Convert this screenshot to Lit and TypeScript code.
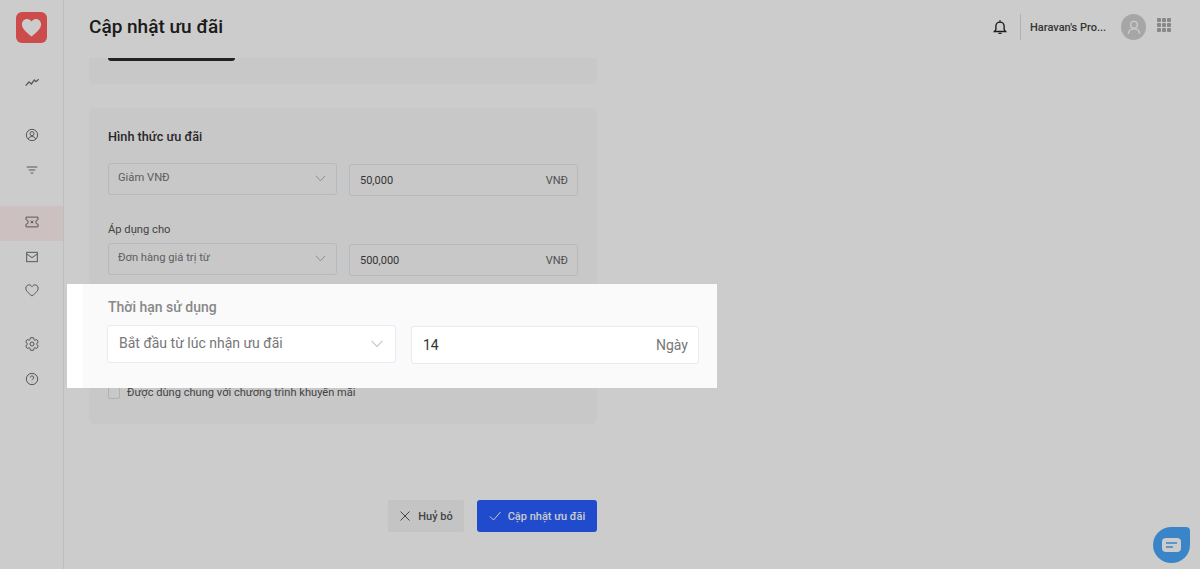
import { LitElement, html, css, svg } from "lit";
import { customElement } from "lit/decorators.js";

const nav = [
  { cls: "g1", d: svg`<path d="M2.500 16l5-5.500 3.500 3 4.500-6 2.500 2.500 4-3.500"/>` },
  { cls: "", d: svg`<circle cx="12" cy="12" r="8.500"/><circle cx="12" cy="10" r="3"/><path d="M6.500 18c1-2.600 3-3.600 5.500-3.600s4.500 1 5.500 3.600"/>` },
  { cls: "", d: svg`<path d="M4 7.500h16M7 12h10M10 16.500h4"/>` },
  { cls: "g3 active", d: svg`<path d="M3 4.700h18v4a3.300 3.300 0 0 0 0 6.600v4H3v-4a3.300 3.300 0 0 0 0-6.600z"/><path d="M10 10l4 4M14 10l-4 4"/>` },
  { cls: "short", d: svg`<rect x="4" y="5" width="16" height="14"/><path d="M4 7.500l8 5.500 8-5.500"/>` },
  { cls: "tall", d: svg`<path d="M12 21C5.500 15.800 2.800 13 2.800 9.300 2.800 6.300 5 4.300 7.500 4.300c1.900 0 3.500 1 4.500 2.700 1-1.700 2.600-2.700 4.500-2.700 2.500 0 4.700 2 4.700 5 0 3.700-2.700 6.500-9.200 11.700z"/>` },
  { cls: "g4", d: svg`<path d="M19.140 12.940c.04-.3.06-.61.06-.94 0-.32-.02-.64-.07-.94l2.030-1.580c.18-.14.23-.41.12-.61l-1.920-3.320c-.12-.22-.37-.29-.59-.22l-2.390.96c-.5-.38-1.030-.7-1.620-.94l-.36-2.540c-.04-.24-.24-.41-.48-.41h-3.840c-.24 0-.43.17-.47.41l-.36 2.540c-.59.24-1.130.57-1.620.94l-2.390-.96c-.22-.08-.47 0-.59.22L2.740 8.870c-.12.21-.08.47.12.61l2.030 1.580c-.05.3-.09.63-.09.94s.02.64.07.94l-2.030 1.580c-.18.14-.23.41-.12.61l1.920 3.320c.12.22.37.29.59.22l2.390-.96c.5.38 1.030.7 1.620.94l.36 2.540c.05.24.24.41.48.41h3.840c.24 0 .44-.17.47-.41l.36-2.540c.59-.24 1.130-.56 1.620-.94l2.390.96c.22.08.47 0 .59-.22l1.920-3.320c.12-.22.07-.47-.12-.61l-2.010-1.580z"/><circle cx="12" cy="12" r="3"/>` },
  { cls: "", d: svg`<circle cx="12" cy="12" r="8.500"/><path d="M9.500 9.800a2.500 2.500 0 1 1 3.700 2.200c-.8.45-1.200 1-1.200 1.900"/><path d="M12 16.300v.6"/>` },
];

const chevron = html`<svg class="chev" viewBox="0 0 12 8"><path d="M.7.9L6 6.700 11.300.9"/></svg>`;

@customElement("app-root")
export class AppRoot extends LitElement {
  static styles = css`
    :host { display: block; height: 569px; overflow: hidden; position: relative; background: #fff;
      font-family: Roboto, "Noto Sans", sans-serif; color: #333; }
    .shell { display: flex; height: 569px; }
    .side { width: 63px; flex: none; border-right: 1px solid #eee; display: flex; flex-direction: column; align-items: stretch; }
    .logo { width: 31px; height: 31px; margin: 12px 0 0 16px; border-radius: 6px; background: #ff5e5e; display: flex; align-items: center; justify-content: center; }
    .logo svg { width: 23px; height: 23px; fill: #fff; }
    .navlist { margin-top: 22px; display: flex; flex-direction: column; }
    .nav { height: 35px; flex: none; display: flex; align-items: center; justify-content: center; }
    .nav svg { width: 16px; height: 16px; fill: none; stroke: #6e6e6e; stroke-width: 1.500; }
    .g1 { margin-bottom: 17px; }
    .g1 svg { stroke-width: 1.900; }
    .g3 { margin-top: 19px; }
    .g4 { margin-top: 18px; }
    .short { height: 31px; }
    .tall { height: 36px; }
    .active { background: #fff0f0; padding-bottom: 4px; box-sizing: border-box; }
    .main { flex: 1; min-width: 0; display: flex; flex-direction: column; }
    .top { height: 58px; flex: none; display: flex; align-items: center; padding: 0 29px 4px 25px; box-sizing: border-box; }
    h1 { margin: 0; font-size: 19px; font-weight: 500; color: #222; line-height: 28px; flex: 1; }
    .bell { width: 18px; height: 18px; fill: none; stroke: #222; stroke-width: 1.800; margin-right: 11px; }
    .divider { width: 1px; height: 26px; background: #ddd; margin-right: 9px; }
    .org { font-size: 11px; font-weight: 500; color: #444; width: 91px; }
    .avatar { width: 25px; height: 26px; border-radius: 50%; background: #d0d0d0; display: flex; align-items: center; justify-content: center; margin-right: 11px; }
    .avatar svg { width: 18px; height: 18px; fill: none; stroke: #fff; stroke-width: 1.800; }
    .apps { display: grid; grid-template-columns: repeat(3, 4px); gap: 1px; margin-bottom: 4px; }
    .apps i { width: 4px; height: 4px; background: #aaa; border-radius: 1px; display: block; }
    .content { flex: 1; padding-left: 25px; overflow: hidden; }
    .card { width: 508px; background: #fafafa; border-radius: 6px; box-sizing: border-box; }
    .c1 { height: 26px; border-radius: 0 0 6px 6px; padding-left: 19px; }
    .bar { width: 127px; height: 3px; background: #2a2a2a; border-radius: 0 0 4px 4px; }
    .c2 { margin-top: 24px; height: 316px; padding: 20px 19px 0; }
    h2 { margin: 0 0 18px; font-size: 12.7px; font-weight: 500; line-height: 17px; color: #333; }
    .row { display: grid; grid-template-columns: 229px 229px; column-gap: 12px; }
    .sel { height: 32px; box-sizing: border-box; border: 1px solid #e3e8f0; border-radius: 3px; display: flex; align-items: center; justify-content: space-between; padding: 0 10px 4px 9px; font-size: 11.2px; color: #777; }
    .chev { width: 11px; height: 7px; fill: none; stroke: #aaa; stroke-width: 1; }
    .sel .chev { margin-top: 2px; }
    .inp { height: 32px; margin-top: 1px; box-sizing: border-box; border: 1px solid #e3e8f0; border-radius: 3px; display: flex; align-items: center; justify-content: space-between; padding: 0 9px 0 10px; font-size: 11px; color: #444; }
    .unit { color: #666; font-size: 11px; }
    .lbl { font-size: 11.200px; line-height: 16px; color: #555; margin: 26px 0 5px; }
    .check { display: flex; align-items: center; gap: 7px; font-size: 11.100px; color: #555; margin-top: 110px; line-height: 14px; }
    .box { width: 12px; height: 12px; border: 1px solid #ddd; border-radius: 2px; background: #fafafa; box-sizing: border-box; flex: none; }
    .actions { width: 508px; margin-top: 76px; display: flex; justify-content: flex-end; gap: 13px; }
    .btn { height: 32px; border-radius: 3px; display: flex; align-items: center; justify-content: center; gap: 7px; font-size: 11px; font-weight: 500; box-sizing: border-box; }
    .btn svg { width: 12px; height: 12px; fill: none; stroke-width: 1; }
    .cancel { width: 76px; background: #f5f5f5; color: #555; }
    .cancel svg { stroke: #555; }
    .ok { width: 120px; background: #275eff; color: #fff; }
    .ok svg { stroke: #fff; }
    .chat { position: absolute; left: 1153px; top: 527px; width: 37px; height: 36px; background: #48a7fa; border-radius: 50% 4px 50% 50%; display: flex; align-items: center; justify-content: center; }
    .chat svg { width: 19px; height: 14px; }
    .dim { position: absolute; inset: 0; background: rgba(0,0,0,.2); }
    .spot { position: absolute; left: 67px; top: 284px; width: 650px; height: 104px; background: #fff; padding-left: 16px; box-sizing: border-box; }
    .spotin { height: 104px; background: #fafafa; box-sizing: border-box; padding: 14px 18px 0 24px; }
    .spotl { font-size: 14px; line-height: 19px; font-weight: 500; color: #888; margin-bottom: 8px; padding-left: 1px; }
    .spotrow { display: grid; grid-template-columns: 289px 288px; column-gap: 15px; }
    .ssel, .sinp { height: 38px; box-sizing: border-box; background: #fff; border: 1px solid #e6ecf3; border-radius: 3px; display: flex; align-items: center; justify-content: space-between; font-size: 14px; }
    .ssel { padding: 0 12px 3px 11px; color: #777; }
    .ssel .chev { width: 12px; height: 8px; margin-top: 3px; }
    .sinp { margin-top: 1px; padding: 0 10px 0 11px; color: #333; }
    .sinp .unit { color: #777; font-size: 14px; }
  `;

  render() {
    return html`
      <div class="shell">
        <aside class="side">
          <div class="logo"><svg viewBox="0 0 24 24"><path d="M12 21.500C5.500 16 2 12.800 2 8.500 2 5.300 4.500 3 7.300 3c1.900 0 3.700 1 4.700 2.700C13 4 14.800 3 16.700 3 19.500 3 22 5.300 22 8.500c0 4.300-3.500 7.500-10 13z"/></svg></div>
          <div class="navlist">
            ${nav.map((n) => html`<div class="nav ${n.cls}"><svg viewBox="0 0 24 24">${n.d}</svg></div>`)}
          </div>
        </aside>
        <div class="main">
          <header class="top">
            <h1>Cập nhật ưu đãi</h1>
            <svg class="bell" viewBox="0 0 24 24"><path d="M4.500 18h15l-2-2.500V11a5.500 5.500 0 0 0-11 0v4.500z"/><path d="M12 3v2M10 20.500h4"/></svg>
            <div class="divider"></div>
            <div class="org">Haravan's Pro...</div>
            <div class="avatar"><svg viewBox="0 0 24 24"><circle cx="12" cy="9" r="4.500"/><path d="M4.500 21c.5-4.500 3.500-6.500 7.500-6.500s7 2 7.500 6.500"/></svg></div>
            <div class="apps">${Array.from({ length: 9 }, () => html`<i></i>`)}</div>
          </header>
          <div class="content">
            <div class="card c1"><div class="bar"></div></div>
            <div class="card c2">
              <h2>Hình thức ưu đãi</h2>
              <div class="row">
                <div class="sel">Giảm VNĐ ${chevron}</div>
                <div class="inp"><span>50,000</span><span class="unit">VNĐ</span></div>
              </div>
              <div class="lbl">Áp dụng cho</div>
              <div class="row">
                <div class="sel">Đơn hàng giá trị từ ${chevron}</div>
                <div class="inp"><span>500,000</span><span class="unit">VNĐ</span></div>
              </div>
              <div class="check"><span class="box"></span>Được dùng chung với chương trình khuyến mãi</div>
            </div>
            <div class="actions">
              <div class="btn cancel"><svg viewBox="0 0 12 12"><path d="M1.500 1.500l9 9M10.500 1.500l-9 9"/></svg>Huỷ bỏ</div>
              <div class="btn ok"><svg viewBox="0 0 12 12"><path d="M1 6.500l3.500 3.500L11.500 2"/></svg>Cập nhật ưu đãi</div>
            </div>
          </div>
        </div>
      </div>
      <div class="chat"><svg viewBox="0 0 19 14"><rect width="19" height="14" rx="4" fill="#fff"/><path d="M4 5h11M4 9h7" stroke="#48a7fa" stroke-width="1.600"/></svg></div>
      <div class="dim"></div>
      <div class="spot">
        <div class="spotin">
          <div class="spotl">Thời hạn sử dụng</div>
          <div class="spotrow">
            <div class="ssel">Bắt đầu từ lúc nhận ưu đãi ${chevron}</div>
            <div class="sinp"><span>14</span><span class="unit">Ngày</span></div>
          </div>
        </div>
      </div>
    `;
  }
}
